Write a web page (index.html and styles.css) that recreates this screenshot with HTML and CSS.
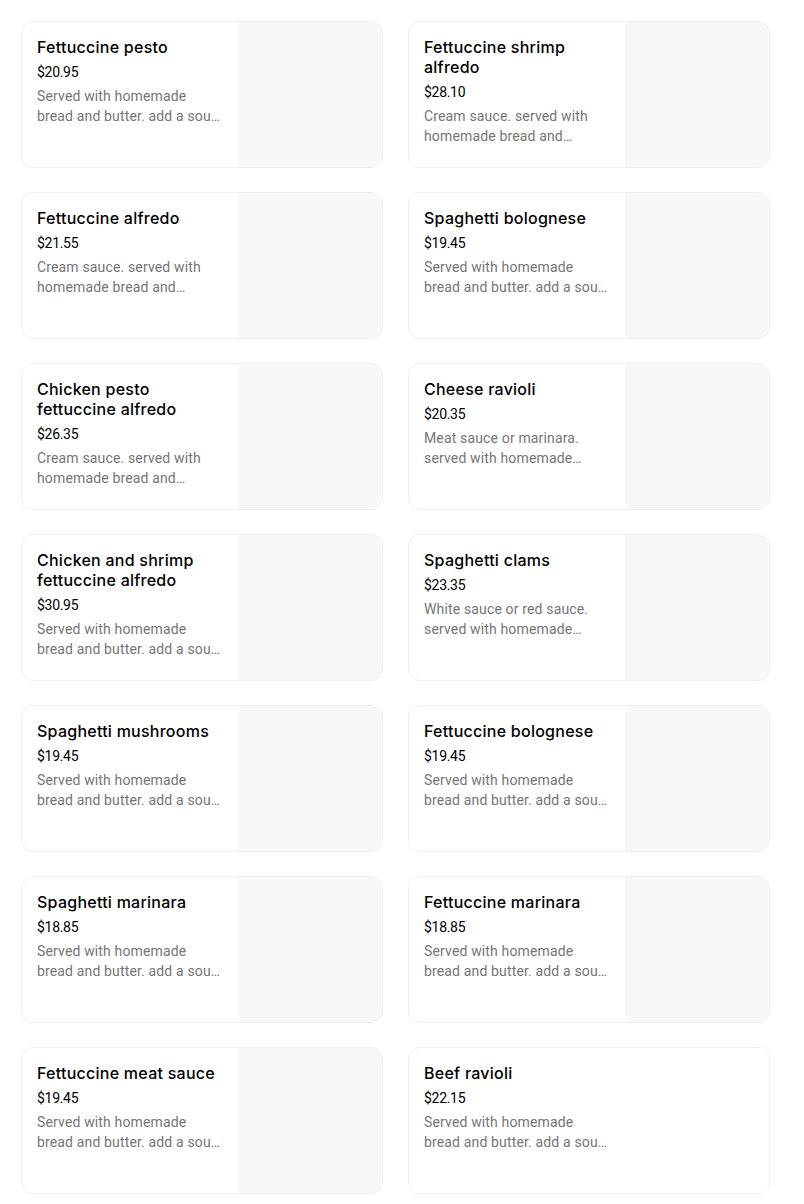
FILE: index.html
```html
<!DOCTYPE html>
<html>
<head>
<meta charset="utf-8">
<link rel="stylesheet" href="styles.css">
</head>
<body>
<div class="grid">
  <div class="card"><div class="info"><div class="title">Fettuccine pesto</div><div class="price">$20.95</div><div class="desc">Served with homemade bread and butter. add a soup or salad for an additional charge.</div></div><div class="thumb"></div></div>
  <div class="card"><div class="info"><div class="title">Fettuccine shrimp alfredo</div><div class="price">$28.10</div><div class="desc">Cream sauce. served with homemade bread and butter.add a soup or salad.</div></div><div class="thumb"></div></div>
  <div class="card"><div class="info"><div class="title">Fettuccine alfredo</div><div class="price">$21.55</div><div class="desc">Cream sauce. served with homemade bread and butter.add a soup or salad.</div></div><div class="thumb"></div></div>
  <div class="card"><div class="info"><div class="title">Spaghetti bolognese</div><div class="price">$19.45</div><div class="desc">Served with homemade bread and butter. add a soup or salad for an additional charge.</div></div><div class="thumb"></div></div>
  <div class="card"><div class="info"><div class="title">Chicken pesto fettuccine alfredo</div><div class="price">$26.35</div><div class="desc">Cream sauce. served with homemade bread and butter.add a soup or salad.</div></div><div class="thumb"></div></div>
  <div class="card"><div class="info"><div class="title">Cheese ravioli</div><div class="price">$20.35</div><div class="desc">Meat sauce or marinara. served with homemade bread and butter.</div></div><div class="thumb"></div></div>
  <div class="card"><div class="info"><div class="title">Chicken and shrimp fettuccine alfredo</div><div class="price">$30.95</div><div class="desc">Served with homemade bread and butter. add a soup or salad for an additional charge.</div></div><div class="thumb"></div></div>
  <div class="card"><div class="info"><div class="title">Spaghetti clams</div><div class="price">$23.35</div><div class="desc">White sauce or red sauce. served with homemade bread and butter.</div></div><div class="thumb"></div></div>
  <div class="card"><div class="info"><div class="title">Spaghetti mushrooms</div><div class="price">$19.45</div><div class="desc">Served with homemade bread and butter. add a soup or salad for an additional charge.</div></div><div class="thumb"></div></div>
  <div class="card"><div class="info"><div class="title">Fettuccine bolognese</div><div class="price">$19.45</div><div class="desc">Served with homemade bread and butter. add a soup or salad for an additional charge.</div></div><div class="thumb"></div></div>
  <div class="card"><div class="info"><div class="title">Spaghetti marinara</div><div class="price">$18.85</div><div class="desc">Served with homemade bread and butter. add a soup or salad for an additional charge.</div></div><div class="thumb"></div></div>
  <div class="card"><div class="info"><div class="title">Fettuccine marinara</div><div class="price">$18.85</div><div class="desc">Served with homemade bread and butter. add a soup or salad for an additional charge.</div></div><div class="thumb"></div></div>
  <div class="card"><div class="info"><div class="title">Fettuccine meat sauce</div><div class="price">$19.45</div><div class="desc">Served with homemade bread and butter. add a soup or salad for an additional charge.</div></div><div class="thumb"></div></div>
  <div class="card"><div class="info"><div class="title">Beef ravioli</div><div class="price">$22.15</div><div class="desc">Served with homemade bread and butter. add a soup or salad for an additional charge.</div></div><div class="thumb thumb-empty"></div></div>
</div>
</body>
</html>
```
FILE: styles.css
```css
* { box-sizing: border-box; }
body {
  margin: 0;
  background: #fff;
  font-family: Inter, "Noto Sans", sans-serif;
  color: #000;
}
.grid {
  display: grid;
  grid-template-columns: 362px 362px;
  column-gap: 25px;
  row-gap: 24px;
  padding: 21px 0 0 21px;
}
.card {
  display: flex;
  height: 147px;
  border: 1px solid #efefef;
  border-radius: 12px;
  overflow: hidden;
}
.info {
  flex: 1;
  min-width: 0;
  padding: 15px;
}
.thumb {
  width: 144px;
  flex-shrink: 0;
  background: #f8f8f8;
}
.thumb-empty {
  background: #fff;
}
.title {
  font-size: 16px;
  font-weight: 500;
  line-height: 20px;
  letter-spacing: 0.25px;
}
.price {
  font-family: Roboto, "Noto Sans", sans-serif;
  font-size: 14px;
  line-height: 20px;
  letter-spacing: -0.3px;
  margin-top: 5px;
}
.desc {
  font-family: Roboto, "Noto Sans", sans-serif;
  font-size: 14px;
  line-height: 20px;
  letter-spacing: 0.15px;
  color: #757575;
  margin-top: 4px;
  display: -webkit-box;
  -webkit-line-clamp: 2;
  -webkit-box-orient: vertical;
  overflow: hidden;
}
```
